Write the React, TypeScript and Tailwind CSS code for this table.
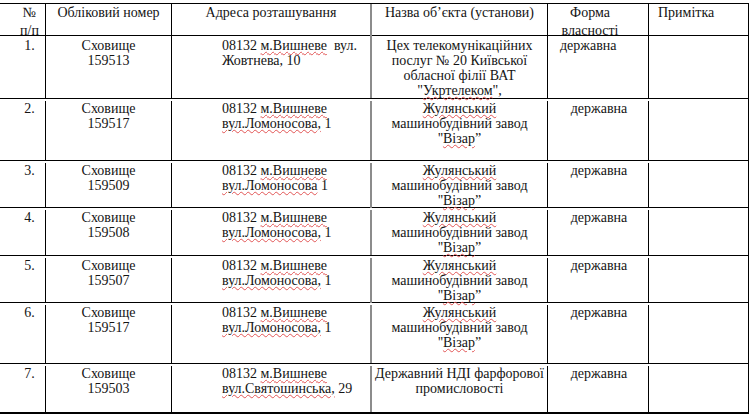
const cols = "grid grid-cols-[46px_126px_200px_176px_101px_99px]";

type Row = {
  n: string;
  id: string;
  addr: React.ReactNode;
  name: React.ReactNode;
  left?: boolean;
  h: string;
};

const Sp = ({ children }: { children: React.ReactNode }) => (
  <span className="underline decoration-wavy decoration-[#e25555] decoration-1 underline-offset-[1px]">
    {children}
  </span>
);

const lomo = (comma: boolean) => (
  <>
    08132 <Sp>м.Вишневе</Sp>
    <br />
    <Sp>вул.Ломоносова{comma ? "," : ""}</Sp> 1
  </>
);

const zhul = (
  <>
    <Sp>Жулянський</Sp>
    <br />
    машинобудівний завод
    <br />
    ''<Sp>Візар</Sp>”
  </>
);

const rows: Row[] = [
  {
    n: "1.",
    id: "159513",
    addr: (
      <>
        08132 <Sp>м.Вишневе</Sp>&nbsp; вул.
        <br />
        Жовтнева, 10
      </>
    ),
    name: (
      <>
        Цех телекомунікаційних
        <br />
        послуг № 20 Київської
        <br />
        обласної філії ВАТ
        <br />
        "<Sp>Укртелеком</Sp>",
      </>
    ),
    left: true,
    h: "h-[63px]",
  },
  { n: "2.", id: "159517", addr: lomo(true), name: zhul, h: "h-[62px]" },
  { n: "3.", id: "159509", addr: lomo(false), name: zhul, h: "h-[47px]" },
  { n: "4.", id: "159508", addr: lomo(true), name: zhul, h: "h-[48px]" },
  { n: "5.", id: "159507", addr: lomo(true), name: zhul, h: "h-[47px]" },
  { n: "6.", id: "159517", addr: lomo(true), name: zhul, h: "h-[61px]" },
  {
    n: "7.",
    id: "159503",
    addr: (
      <>
        08132 <Sp>м.Вишневе</Sp>
        <br />
        <Sp>вул.Святошинська,</Sp> 29
      </>
    ),
    name: (
      <>
        Державний НДІ фарфорової
        <br />
        промисловості
      </>
    ),
    h: "h-[50px]",
  },
];

export default function App() {
  return (
    <div className="w-[750px] h-[415px] bg-white pt-[3px] font-['Liberation_Serif',serif] text-[14px] text-[#141414] overflow-hidden">
      <div className="w-[749px] border-t border-r border-black">
        {/* header */}
        <div className={`${cols} h-[32px] border-b border-black leading-[18px]`}>
          <div className="border-r border-black pl-[14px] text-center">
            №<br />п/п
          </div>
          <div className="border-r border-black text-center">Обліковий номер</div>
          <div className="border-r-2 border-[#8c8c8c] text-center">Адреса розташування</div>
          <div className="border-r border-black text-center whitespace-nowrap">
            Назва об’єкта (установи)
          </div>
          <div className="border-r border-black text-center pr-[16px]">
            Форма
            <br />
            власності
          </div>
          <div className="pl-[9px]">Примітка</div>
        </div>

        {rows.map((r, i) => (
          <div
            key={i}
            className={`${cols} ${r.h} border-b ${i === rows.length - 1 ? "border-b-2" : ""} border-black leading-[15px] pt-[2px]`}
          >
            <div className="border-r border-black pl-[14px] text-center">{r.n}</div>
            <div className="border-r border-black text-center">
              Сховище
              <br />
              {r.id}
            </div>
            <div className="border-r-2 border-[#8c8c8c] pl-[50px] whitespace-nowrap">{r.addr}</div>
            <div className="border-r border-black text-center whitespace-nowrap">{r.name}</div>
            <div className={`border-r border-black ${r.left ? "pl-[12px]" : "text-center pl-[2px]"}`}>
              державна
            </div>
            <div />
          </div>
        ))}
      </div>
    </div>
  );
}
